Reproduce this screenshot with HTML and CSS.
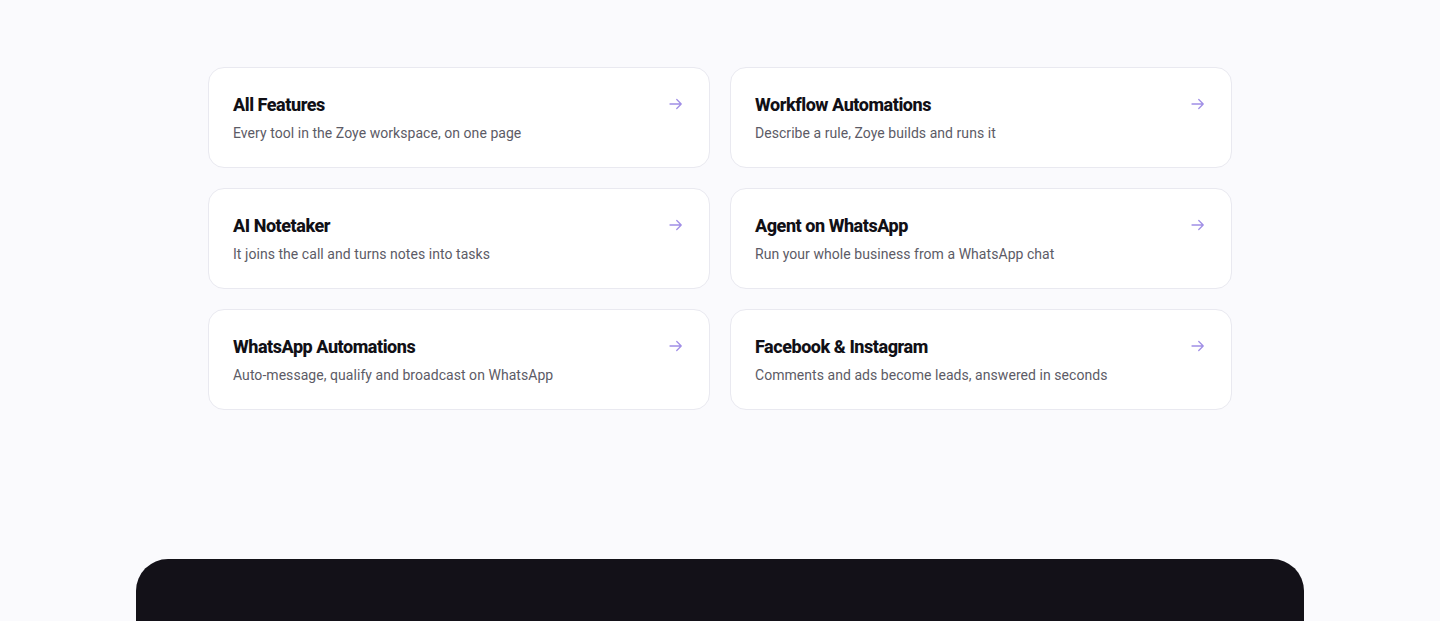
FILE: index.html
```html
<!DOCTYPE html>
<html lang="en">
<head>
  <meta charset="UTF-8">
  <title>Zoye Features</title>
  <meta name="viewport" content="width=device-width, initial-scale=1">
  <link rel="stylesheet" href="styles.css">
</head>
<body>
  <section class="features">
    <div class="grid">
      <a class="card" href="#">
        <div class="card-text">
          <h3>All Features</h3>
          <p>Every tool in the Zoye workspace, on one page</p>
        </div>
        <svg class="arrow" viewBox="0 0 24 24"><path d="M4 12h15M13 6l6 6-6 6"/></svg>
      </a>
      <a class="card" href="#">
        <div class="card-text">
          <h3>Workflow Automations</h3>
          <p>Describe a rule, Zoye builds and runs it</p>
        </div>
        <svg class="arrow" viewBox="0 0 24 24"><path d="M4 12h15M13 6l6 6-6 6"/></svg>
      </a>
      <a class="card" href="#">
        <div class="card-text">
          <h3>AI Notetaker</h3>
          <p>It joins the call and turns notes into tasks</p>
        </div>
        <svg class="arrow" viewBox="0 0 24 24"><path d="M4 12h15M13 6l6 6-6 6"/></svg>
      </a>
      <a class="card" href="#">
        <div class="card-text">
          <h3>Agent on WhatsApp</h3>
          <p>Run your whole business from a WhatsApp chat</p>
        </div>
        <svg class="arrow" viewBox="0 0 24 24"><path d="M4 12h15M13 6l6 6-6 6"/></svg>
      </a>
      <a class="card" href="#">
        <div class="card-text">
          <h3>WhatsApp Automations</h3>
          <p>Auto-message, qualify and broadcast on WhatsApp</p>
        </div>
        <svg class="arrow" viewBox="0 0 24 24"><path d="M4 12h15M13 6l6 6-6 6"/></svg>
      </a>
      <a class="card" href="#">
        <div class="card-text">
          <h3>Facebook &amp; Instagram</h3>
          <p>Comments and ads become leads, answered in seconds</p>
        </div>
        <svg class="arrow" viewBox="0 0 24 24"><path d="M4 12h15M13 6l6 6-6 6"/></svg>
      </a>
    </div>
  </section>

  <section class="cta"></section>
</body>
</html>
```

FILE: styles.css
```css
body {
  margin: 0;
  font-family: Roboto, "Liberation Sans", Arial, sans-serif;
  background-color: #fafafd;
  color: #111;
}
.features { padding: 67px 0 149px; }
.grid {
  display: grid;
  grid-template-columns: 1fr 1fr;
  gap: 20.5px 20px;
  width: 1024px;
  margin: 0 auto;
}
.card {
  display: flex;
  justify-content: space-between;
  align-items: flex-start;
  background-color: #fff;
  border: 1px solid #e9e9f0;
  border-radius: 16px;
  padding: 24px;
  text-decoration: none;
  height: 100.5px;
  box-sizing: border-box;
}
.card h3 {
  margin: 0;
  font-size: 18px;
  line-height: 26px;
  font-weight: 800;
  color: #111016;
  letter-spacing: -0.45px;
}
.card p {
  margin: 5px 0 0;
  font-size: 14px;
  line-height: 20px;
  color: #5c5b66;
  letter-spacing: 0.05px;
}
.arrow {
  width: 18px;
  height: 18px;
  margin-top: 3px;
  fill: none;
  stroke: #a08ee6;
  stroke-width: 1.7;
  stroke-linecap: round;
  stroke-linejoin: round;
}
.cta {
  width: 1168px;
  height: 300px;
  margin: 0 auto;
  background-color: #131118;
  border-radius: 32px 32px 0 0;
}
```
